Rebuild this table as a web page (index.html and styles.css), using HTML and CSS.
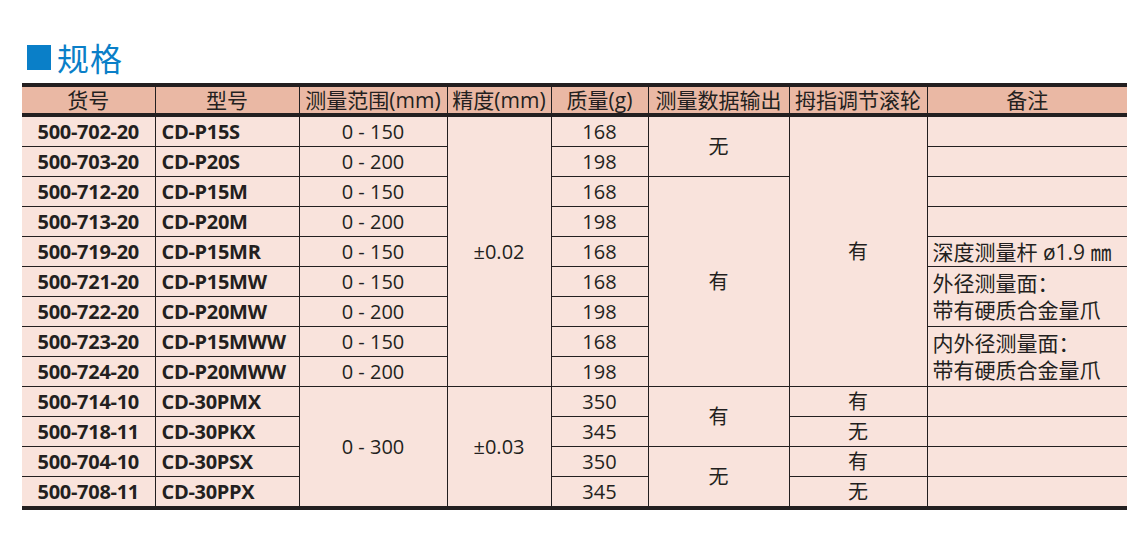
FILE: index.html
```html
<!DOCTYPE html>
<html lang="zh-CN">
<head>
<meta charset="utf-8">
<title>规格</title>
<link rel="stylesheet" href="styles.css">
</head>
<body>
<div class="page">
  <h2 class="title"><span class="square"></span><span class="title-text">规格</span></h2>
  <table class="spec">
    <colgroup>
      <col class="c1"><col class="c2"><col class="c3"><col class="c4"><col class="c5"><col class="c6"><col class="c7"><col class="c8">
    </colgroup>
    <thead>
      <tr>
        <th>货号</th><th>型号</th><th>测量范围(mm)</th><th>精度(mm)</th><th>质量(g)</th><th>测量数据输出</th><th>拇指调节滚轮</th><th>备注</th>
      </tr>
    </thead>
    <tbody>
      <tr><td class="code">500-702-20</td><td class="model">CD-P15S</td><td>0 - 150</td><td rowspan="9">±0.02</td><td>168</td><td rowspan="2">无</td><td rowspan="9">有</td><td class="note"></td></tr>
      <tr><td class="code">500-703-20</td><td class="model">CD-P20S</td><td>0 - 200</td><td>198</td><td class="note"></td></tr>
      <tr><td class="code">500-712-20</td><td class="model">CD-P15M</td><td>0 - 150</td><td>168</td><td rowspan="7">有</td><td class="note"></td></tr>
      <tr><td class="code">500-713-20</td><td class="model">CD-P20M</td><td>0 - 200</td><td>198</td><td class="note"></td></tr>
      <tr><td class="code">500-719-20</td><td class="model">CD-P15MR</td><td>0 - 150</td><td>168</td><td class="note">深度测量杆 ø1.9 ㎜</td></tr>
      <tr><td class="code">500-721-20</td><td class="model">CD-P15MW</td><td>0 - 150</td><td>168</td><td class="note multi" rowspan="2">外径测量面：<br>带有硬质合金量爪</td></tr>
      <tr><td class="code">500-722-20</td><td class="model">CD-P20MW</td><td>0 - 200</td><td>198</td></tr>
      <tr><td class="code">500-723-20</td><td class="model">CD-P15MWW</td><td>0 - 150</td><td>168</td><td class="note multi" rowspan="2">内外径测量面：<br>带有硬质合金量爪</td></tr>
      <tr><td class="code">500-724-20</td><td class="model">CD-P20MWW</td><td>0 - 200</td><td>198</td></tr>
      <tr><td class="code">500-714-10</td><td class="model">CD-30PMX</td><td rowspan="4">0 - 300</td><td rowspan="4">±0.03</td><td>350</td><td rowspan="2">有</td><td>有</td><td class="note"></td></tr>
      <tr><td class="code">500-718-11</td><td class="model">CD-30PKX</td><td>345</td><td>无</td><td class="note"></td></tr>
      <tr><td class="code">500-704-10</td><td class="model">CD-30PSX</td><td>350</td><td rowspan="2">无</td><td>有</td><td class="note"></td></tr>
      <tr><td class="code">500-708-11</td><td class="model">CD-30PPX</td><td>345</td><td>无</td><td class="note"></td></tr>
    </tbody>
  </table>
</div>
</body>
</html>
```

FILE: styles.css
```css
html, body {
  margin: 0;
  padding: 0;
  background: #ffffff;
}

.page {
  padding: 38px 0 0 22px;
  font-family: "Open Sans", "Noto Sans CJK SC", sans-serif;
  color: #231f20;
}

.title {
  display: flex;
  align-items: center;
  gap: 6px;
  margin: 0 0 6px 5px;
  height: 39px;
  font-weight: 400;
}

.square {
  display: block;
  width: 24px;
  height: 25px;
  background: #0a7fc8;
}

.title-text {
  font-family: "Noto Sans CJK SC", sans-serif;
  font-size: 32px;
  line-height: 39px;
  color: #0a7fc8;
  letter-spacing: 1px;
}

.spec {
  width: 1105px;
  table-layout: fixed;
  border-collapse: collapse;
  border-top: 4px solid #231f20;
  border-bottom: 4px solid #231f20;
  background: #f9e3dc;
}

.c1 { width: 133px; }
.c2 { width: 144px; }
.c3 { width: 148px; }
.c4 { width: 104px; }
.c5 { width: 97px; }
.c6 { width: 141px; }
.c7 { width: 138px; }
.c8 { width: 200px; }

.spec th,
.spec td {
  border: 1px solid #231f20;
  padding: 0;
  text-align: center;
  vertical-align: middle;
  white-space: nowrap;
}

.spec th:first-child,
.spec td:first-child {
  border-left: none;
}

.spec th:last-child,
.spec td.note {
  border-right: none;
}

.spec thead tr {
  border-bottom: 4px solid #231f20;
}

.spec th {
  height: 26px;
  background: #eab8a4;
  font-weight: 400;
  font-size: 21px;
  line-height: 24px;
  letter-spacing: 0;
}

.spec td {
  height: 29px;
  font-size: 20px;
  line-height: 24px;
}

.spec td.code {
  font-weight: 700;
  letter-spacing: -0.3px;
}

.spec td.model {
  font-weight: 700;
  text-align: left;
  padding-left: 6px;
  letter-spacing: -0.3px;
}

.spec td.note {
  text-align: left;
  padding-left: 5px;
  font-size: 21px;
}

.spec td.multi {
  line-height: 27px;
}
```
